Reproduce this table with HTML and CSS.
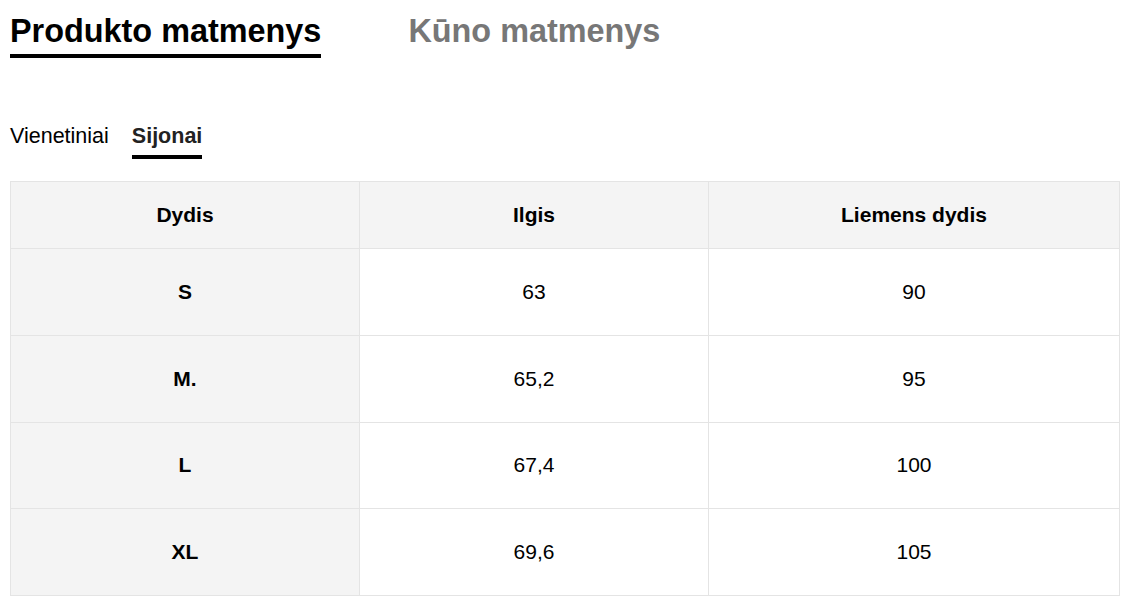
FILE: index.html
```html
<!DOCTYPE html>
<html lang="lt">
<head>
<meta charset="utf-8">
<title>Matmenys</title>
<link rel="stylesheet" href="styles.css">
</head>
<body>
<div class="page">
  <nav class="main-tabs">
    <span class="main-tab active">Produkto matmenys</span>
    <span class="main-tab">Kūno matmenys</span>
  </nav>
  <nav class="sub-tabs">
    <span class="sub-tab">Vienetiniai</span>
    <span class="sub-tab active">Sijonai</span>
  </nav>
  <table class="size-table">
    <colgroup>
      <col class="c1"><col class="c2"><col class="c3">
    </colgroup>
    <thead>
      <tr><th>Dydis</th><th>Ilgis</th><th>Liemens dydis</th></tr>
    </thead>
    <tbody>
      <tr><th>S</th><td>63</td><td>90</td></tr>
      <tr><th>M.</th><td>65,2</td><td>95</td></tr>
      <tr><th>L</th><td>67,4</td><td>100</td></tr>
      <tr><th>XL</th><td>69,6</td><td>105</td></tr>
    </tbody>
  </table>
</div>
</body>
</html>
```

FILE: styles.css
```css
html, body {
  margin: 0;
  padding: 0;
  background: #fff;
}
body {
  font-family: "Liberation Sans", Arial, sans-serif;
  color: #000;
}
.page {
  padding: 13px 10px 0 10px;
}
.main-tabs {
  display: flex;
  gap: 87px;
}
.main-tab {
  font-size: 32.4px;
  font-weight: bold;
  line-height: 37px;
  color: #777;
  padding-bottom: 4px;
  border-bottom: 4px solid transparent;
}
.main-tab.active {
  color: #000;
  border-bottom-color: #000;
}
.sub-tabs {
  display: flex;
  gap: 23px;
  margin-top: 66px;
}
.sub-tab {
  font-size: 21.5px;
  line-height: 24px;
  color: #000;
  padding-bottom: 7px;
  border-bottom: 4px solid transparent;
}
.sub-tab.active {
  font-weight: bold;
  color: #222;
  border-bottom-color: #000;
}
.size-table {
  margin-top: 22px;
  border-collapse: collapse;
  table-layout: fixed;
  width: 1109px;
  font-size: 21px;
  line-height: 24px;
}
.c1 { width: 349px; }
.c2 { width: 349px; }
.c3 { width: 411px; }
.size-table th,
.size-table td {
  border: 1px solid #e4e4e4;
  text-align: center;
  padding: 30.9px 0;
  font-weight: normal;
}
.size-table thead th {
  background: #f4f4f4;
  font-weight: bold;
  padding: 21px 0;
}
.size-table tbody th {
  background: #f4f4f4;
  font-weight: bold;
}
```
